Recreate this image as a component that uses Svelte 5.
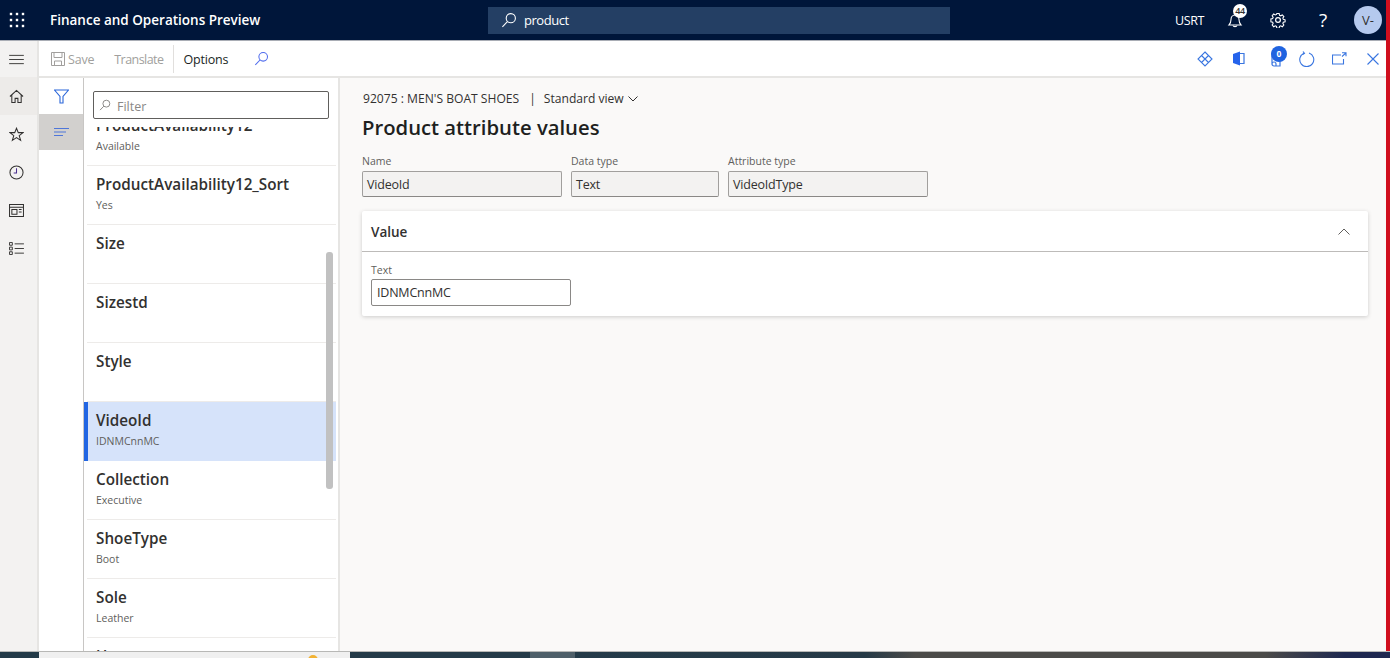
<script lang="ts">
	// Product attribute values page: app bar, toolbar, attribute list and detail form

	const attributes = [
		{ name: 'ProductAvailability12', value: 'Available' },
		{ name: 'ProductAvailability12_Sort', value: 'Yes' },
		{ name: 'Size', value: '' },
		{ name: 'Sizestd', value: '' },
		{ name: 'Style', value: '' },
		{ name: 'VideoId', value: 'IDNMCnnMC', selected: true },
		{ name: 'Collection', value: 'Executive' },
		{ name: 'ShoeType', value: 'Boot' },
		{ name: 'Sole', value: 'Leather' },
		{ name: 'Upper', value: 'Leather' }
	];

	const fields = [
		{ label: 'Name', value: 'VideoId', width: 200 },
		{ label: 'Data type', value: 'Text', width: 148 },
		{ label: 'Attribute type', value: 'VideoIdType', width: 200 }
	];
</script>

<div class="page">
	<div class="frame">
		<div class="app">
			<header class="topbar">
				<div class="waffle">
					<svg width="16" height="16" viewBox="0 0 16 16" fill="#fff">
						{#each [2, 8, 14] as y}
							{#each [2, 8, 14] as x}
								<rect x={x - 1.2} y={y - 1.2} width="2.4" height="2.4" />
							{/each}
						{/each}
					</svg>
				</div>
				<div class="app-title">Finance and Operations Preview</div>
				<div class="search">
					<svg width="16" height="16" viewBox="0 0 16 16" fill="none" stroke="#fff" stroke-width="1.1">
						<circle cx="9.8" cy="6.2" r="4.6" />
						<path d="M6.4 9.6 1.4 14.8" />
					</svg>
					<span>product</span>
				</div>
				<div class="top-right">
					<span class="company">USRT</span>
					<div class="bell">
						<svg width="16" height="18" viewBox="0 0 16 18" fill="none" stroke="#fff" stroke-width="1.1">
							<path d="M2 14h12c-1.5-1.5-2-3-2-5.5 0-2.5-1.5-4.5-4-4.5S4 6 4 8.5C4 11 3.5 12.5 2 14Z" />
							<path d="M6 14.5c.3 1.5 3.7 1.5 4 0" />
						</svg>
						<span class="bell-badge">44</span>
					</div>
					<div class="gear">
						<svg width="16" height="16" viewBox="0 0 16 16" fill="none" stroke="#fff" stroke-width="1.2">
							<circle cx="8" cy="8" r="2.4" />
							<path d="M6.7 1h2.6l.4 2 1.3.6 1.8-1 1.700 1.900-1.100 1.700.5 1.300 2 .5v2.300l-2 .5-.5 1.300 1.100 1.700-1.700 1.900-1.800-1-1.300.6-.4 2H6.700l-.4-2-1.300-.6-1.800 1-1.700-1.900 1.100-1.700-.5-1.300-2-.5V7l2-.5.5-1.300-1.100-1.700 1.700-1.900 1.800 1 1.300-.6Z" transform="translate(.8 .6) scale(.9)" />
						</svg>
					</div>
					<span class="help">?</span>
					<span class="avatar">V-</span>
				</div>
			</header>

			<div class="body">
				<nav class="rail">
					<div class="rail-btn menu">
						<svg width="15" height="11" viewBox="0 0 16 12" stroke="#323130" stroke-width="1">
							<path d="M0 1.5h16M0 6h16M0 10.5h16" />
						</svg>
					</div>
					<div class="rail-btn current">
						<svg width="15" height="15" viewBox="0 0 16 16" fill="none" stroke="#323130" stroke-width="1.1">
							<path d="M1 8 8 1.5 15 8M3 6.5V14.5h3.5V10h3v4.500H13V6.500" />
						</svg>
					</div>
					<div class="rail-btn">
						<svg width="15" height="15" viewBox="0 0 16 16" fill="none" stroke="#323130" stroke-width="1.1">
							<path d="M8 1.3 9.9 6h5l-4 3.2 1.5 5L8 11.3l-4.4 2.9 1.5-5L1.1 6h5Z" />
						</svg>
					</div>
					<div class="rail-btn">
						<svg width="15" height="15" viewBox="0 0 16 16" fill="none" stroke="#323130" stroke-width="1.1">
							<circle cx="8" cy="8" r="7" />
							<path d="M8 3.5V8.500H5" stroke="#4b2f8f" />
						</svg>
					</div>
					<div class="rail-btn">
						<svg width="15" height="13" viewBox="0 0 16 14" fill="none" stroke="#323130" stroke-width="1.1">
							<path d="M.5 .5h15v13H.5ZM.5 3.5h15M3 6h5.5v5H3ZM10.5 6h3M10.5 8.5h3" />
						</svg>
					</div>
					<div class="rail-btn">
						<svg width="15" height="13" viewBox="0 0 16 14" fill="none" stroke="#323130" stroke-width="1">
							<path d="M.5 .5h3v3h-3ZM.5 5.5h3v3h-3ZM.5 10.5h3v3h-3ZM6 2h10M6 7h10M6 12h10" />
						</svg>
					</div>
				</nav>

				<div class="workspace">
					<div class="toolbar">
						<div class="tool disabled save">
							<svg width="14" height="14" viewBox="0 0 14 14" fill="none" stroke="#a19f9d" stroke-width="1">
								<path d="M.5 .5h13v13H.5ZM3 .5v5h8v-5M3.5 13.5V9h7v4.5" />
							</svg>
							<span>Save</span>
						</div>
						<div class="tool disabled translate"><span>Translate</span></div>
						<div class="divider"></div>
						<div class="tool options"><span>Options</span></div>
						<svg class="find" width="15" height="15" viewBox="0 0 16 16" fill="none" stroke="#4f6bed" stroke-width="1.1">
							<circle cx="9.8" cy="6.2" r="4.6" />
							<path d="M6.4 9.6 1.4 14.8" />
						</svg>
						<div class="tool-icons">
							<svg width="16" height="16" viewBox="0 0 16 16" fill="none" stroke="#3a76e0" stroke-width="1.1">
								<path d="M8 1 15 8 8 15 1 8ZM4.5 4.5 11.5 11.5M11.5 4.5 4.5 11.5" />
							</svg>
							<svg class="office" width="13" height="15" viewBox="0 0 13 15">
								<path d="M1 3 8 .5V14.500L1 12Z" fill="#2563eb" />
								<path d="M8 2.5h4v10H8" fill="none" stroke="#3a76e0" stroke-width="1.2" />
							</svg>
							<div class="attach">
								<svg width="12" height="20" viewBox="0 0 12 20" fill="none" stroke="#3a76e0" stroke-width="1.2">
									<path d="M1 4h8v13H3c-1.2 0-2-.8-2-2Zm0 11c0-1.2.8-2 2-2 1.2 0 2 .8 2 2v2" />
								</svg>
								<span class="attach-badge">0</span>
							</div>
							<svg class="refresh" width="16" height="16" viewBox="0 0 16 16" fill="none" stroke="#3a76e0" stroke-width="1.1">
								<path d="M5 2.2a7 7 0 1 0 5 -.2" />
								<path d="M4 .5 5.5 2.3 3.5 3.5" />
							</svg>
							<svg class="popout" width="15" height="13" viewBox="0 0 15 13" fill="none" stroke="#3a76e0" stroke-width="1.1">
								<path d="M9 3H.5v9h11V7M10 .8h4v3.5M14 .8 10 4.5" />
							</svg>
							<svg class="close" width="12" height="12" viewBox="0 0 12 12" stroke="#3a76e0" stroke-width="1.1">
								<path d="M.5 .5 11.5 11.5M11.5 .5 .5 11.5" />
							</svg>
						</div>
					</div>

					<div class="content">
						<div class="pane-tabs">
							<div class="pane-tab">
								<svg width="15" height="15" viewBox="0 0 15 15" fill="none" stroke="#2b66d9" stroke-width="1.1">
									<path d="M.5 1h14L9 7.5V14H6V7.5Z" />
								</svg>
							</div>
							<div class="pane-tab active">
								<svg width="15" height="8" viewBox="0 0 15 8" stroke="#4f76d9" stroke-width="1">
									<path d="M0 .5h15M0 4h12M0 7.5h9" />
								</svg>
							</div>
						</div>

						<aside class="list-pane">
							<div class="filter-wrap">
								<div class="filter">
									<svg width="12" height="12" viewBox="0 0 16 16" fill="none" stroke="#8a8886" stroke-width="1.3">
										<circle cx="9.8" cy="6.2" r="4.6" />
										<path d="M6.4 9.6 1.4 14.8" />
									</svg>
									<span>Filter</span>
								</div>
							</div>
							<div class="list">
								<div class="list-inner">
									{#each attributes as item}
										<div class="row" class:selected={item.selected}>
											<div class="row-name">{item.name}</div>
											<div class="row-value">{item.value}</div>
										</div>
									{/each}
								</div>
								<div class="scroll-thumb"></div>
							</div>
						</aside>

						<main class="detail">
							<div class="crumb">
								<span>92075 : MEN'S BOAT SHOES</span>
								<span class="crumb-sep">|</span>
								<span>Standard view</span>
								<svg width="10" height="6" viewBox="0 0 10 6" fill="none" stroke="#323130" stroke-width="1">
									<path d="M.5 .5 5 5 9.5 .5" />
								</svg>
							</div>
							<h1>Product attribute values</h1>

							<div class="fields">
								{#each fields as field}
									<div class="field">
										<div class="field-label">{field.label}</div>
										<div class="field-input" style="width: {field.width}px">{field.value}</div>
									</div>
								{/each}
							</div>

							<section class="card">
								<div class="card-head">
									<span class="card-title">Value</span>
									<svg width="12" height="7" viewBox="0 0 12 7" fill="none" stroke="#605e5c" stroke-width="1">
										<path d="M.5 6.5 6 1l5.5 5.5" />
									</svg>
								</div>
								<div class="card-body">
									<div class="field-label">Text</div>
									<div class="text-input">IDNMCnnMC</div>
								</div>
							</section>
						</main>
					</div>
				</div>
			</div>
		</div>
		<div class="redline"></div>
	</div>

	<footer class="taskbar">
		<div class="task-a"></div>
		<div class="task-window"><span class="task-dot"></span></div>
		<div class="task-b"></div>
		<div class="task-active"></div>
		<div class="task-rest"><span class="tray">ENG</span><span class="clock">2:50 PM</span></div>
	</footer>
</div>

<style>
	:global(body) {
		margin: 0;
		background: #faf9f8;
	}

	.page {
		width: 1390px;
		height: 658px;
		display: flex;
		flex-direction: column;
		overflow: hidden;
		font-family: 'Open Sans', 'Noto Sans', sans-serif;
		color: #323130;
	}

	.frame {
		flex: 1;
		display: flex;
		min-height: 0;
	}

	.app {
		flex: 1;
		display: flex;
		flex-direction: column;
		min-width: 0;
	}

	.redline {
		width: 4px;
		background: #d00f1e;
	}

	/* app bar */
	.topbar {
		height: 41px;
		flex: none;
		background: #00163a;
		display: flex;
		align-items: center;
		color: #fff;
		box-sizing: border-box;
		border-bottom: 1px solid #a9adb5;
	}

	.waffle {
		width: 50px;
		padding-left: 9px;
		box-sizing: border-box;
		display: flex;
	}

	.app-title {
		width: 438px;
		font-size: 13.5px;
		font-weight: 600;
	}

	.search {
		width: 462px;
		height: 27px;
		background: #243f64;
		display: flex;
		align-items: center;
		gap: 7px;
		padding-left: 13px;
		box-sizing: border-box;
		font-size: 13px;
		letter-spacing: -0.45px;
	}

	.top-right {
		flex: 1;
		display: flex;
		align-items: center;
		padding-left: 225px;
		font-size: 12.5px;
	}

	.company {
		letter-spacing: -0.4px;
		width: 52px;
	}

	.bell {
		position: relative;
		display: flex;
		width: 35px;
	}

	.bell-badge {
		position: absolute;
		left: 6px;
		top: -7px;
		width: 14px;
		height: 14px;
		border-radius: 50%;
		background: #fff;
		color: #323130;
		font-size: 9px;
		font-weight: 600;
		line-height: 14px;
		text-align: center;
		letter-spacing: -0.4px;
	}

	.gear {
		display: flex;
		width: 57px;
		padding-left: 8px;
		box-sizing: border-box;
	}

	.help {
		font-size: 19px;
		width: 35px;
		font-weight: 400;
	}

	.avatar {
		width: 28px;
		height: 28px;
		border-radius: 50%;
		background: #b5c9ee;
		color: #323130;
		font-size: 13px;
		line-height: 28px;
		text-align: center;
	}

	/* left rail */
	.body {
		flex: 1;
		display: flex;
		min-height: 0;
	}

	.rail {
		width: 37px;
		flex: none;
		background: #f3f2f1;
		border-right: 2px solid #e6e5e3;
	}

	.rail-btn {
		height: 38px;
		display: flex;
		align-items: center;
		justify-content: center;
		padding-right: 5px;
	}

	.rail-btn.menu {
		height: 36px;
	}

	.rail-btn.current {
		background: #edebe9;
	}

	/* toolbar */
	.workspace {
		flex: 1;
		display: flex;
		flex-direction: column;
		min-width: 0;
	}

	.toolbar {
		height: 37px;
		flex: none;
		box-sizing: border-box;
		background: #fff;
		border-bottom: 2px solid #e6e5e3;
		display: flex;
		align-items: center;
		font-size: 12.5px;
	}

	.tool {
		display: flex;
		align-items: center;
		letter-spacing: -0.2px;
	}

	.tool span {
		padding-top: 2px;
	}

	.tool.disabled {
		color: #a19f9d;
	}

	.save {
		gap: 3px;
		margin-left: 12px;
	}

	.translate {
		margin-left: 20px;
		letter-spacing: -0.55px;
	}

	.divider {
		width: 1px;
		height: 28px;
		background: #e1dfdd;
		margin-left: 10px;
	}

	.options {
		margin-left: 9px;
		color: #201f1e;
	}

	.find {
		margin-left: 26px;
	}

	.tool-icons {
		margin-left: auto;
		display: flex;
		align-items: center;
		padding-right: 7px;
	}

	.office {
		margin-left: 19px;
	}

	.attach {
		position: relative;
		display: flex;
		margin-left: 26px;
	}

	.attach-badge {
		position: absolute;
		left: 0;
		top: -3px;
		width: 16px;
		height: 16px;
		border-radius: 50%;
		background: #1f63e0;
		color: #fff;
		font-size: 8.5px;
		font-weight: 700;
		line-height: 16px;
		text-align: center;
	}

	.refresh {
		margin-left: 16px;
	}

	.popout {
		margin-left: 17px;
	}

	.close {
		margin-left: 20px;
	}

	/* pane layout */
	.content {
		flex: 1;
		display: flex;
		min-height: 0;
	}

	.pane-tabs {
		width: 44px;
		flex: none;
		background: #fff;
		border-right: 1px solid #c8c6c4;
	}

	.pane-tab {
		height: 36px;
		display: flex;
		align-items: center;
		justify-content: center;
	}

	.pane-tab.active {
		background: #d2d0ce;
	}

	.list-pane {
		width: 254px;
		flex: none;
		background: #fff;
		border-right: 2px solid #e6e5e3;
		display: flex;
		flex-direction: column;
		min-height: 0;
	}

	.filter-wrap {
		padding: 13px 9px 8px 9px;
		flex: none;
		position: relative;
		z-index: 1;
		background: #fff;
	}

	.filter {
		height: 28px;
		box-sizing: border-box;
		border: 1px solid #605e5c;
		border-radius: 2px;
		display: flex;
		align-items: center;
		gap: 6px;
		padding-left: 5px;
		font-size: 12.5px;
		color: #8a8886;
		width: 236px;
	}

	.filter span {
		padding-top: 2px;
	}

	.list {
		flex: 1;
		position: relative;
		overflow: hidden;
		min-height: 0;
	}

	.list-inner {
		margin-top: -20px;
	}

	.row {
		height: 59px;
		box-sizing: border-box;
		padding: 6px 0 0 12px;
		margin-right: 2px;
		background: linear-gradient(#edebe9, #edebe9) no-repeat 3px 100% / calc(100% - 3px) 1px;
	}

	.row.selected {
		background: #d6e3fa;
		border-left: 4px solid #2266e3;
		padding-left: 8px;
	}

	.row-name {
		font-size: 15.25px;
		font-weight: 600;
		line-height: 24px;
		color: #323130;
	}

	.row-value {
		font-size: 10.5px;
		line-height: 16px;
		margin-top: 1px;
		color: #605e5c;
	}

	.scroll-thumb {
		position: absolute;
		left: 242px;
		top: 125px;
		width: 7px;
		height: 237px;
		border-radius: 3px;
		background: #c1c1c1;
	}

	/* detail */
	.detail {
		flex: 1;
		background: #faf9f8;
		padding: 13px 18px 0 22px;
		min-width: 0;
	}

	.crumb {
		display: flex;
		align-items: center;
		font-size: 12.1px;
		line-height: 16px;
		padding-left: 1px;
	}

	.crumb-sep {
		margin: 0 8px 0 10px;
	}

	.crumb svg {
		margin-left: 4px;
	}

	h1 {
		margin: 5px 0 0;
		font-size: 20.25px;
		font-weight: 600;
		line-height: 30px;
		color: #201f1e;
	}

	.fields {
		display: flex;
		gap: 9px;
		margin-top: 12px;
	}

	.field-label {
		font-size: 10.5px;
		line-height: 14px;
		color: #605e5c;
		margin-bottom: 3px;
	}

	.field-input {
		height: 26px;
		box-sizing: border-box;
		background: #f3f2f1;
		border: 1px solid #a19f9d;
		border-bottom-color: #8a8886;
		border-radius: 2px;
		padding-left: 4px;
		font-size: 12.5px;
		line-height: 26px;
		letter-spacing: -0.2px;
		color: #323130;
	}

	.card {
		margin-top: 14px;
		background: #fff;
		border-radius: 2px;
		box-shadow: 0 1px 4px rgba(0, 0, 0, 0.18);
		height: 105px;
	}

	.card-head {
		height: 41px;
		box-sizing: border-box;
		border-bottom: 1px solid #bdbbb9;
		display: flex;
		align-items: center;
		justify-content: space-between;
		padding: 0 18px 0 9px;
		font-size: 13.5px;
		font-weight: 600;
	}

	.card-title {
		padding-top: 2px;
	}

	.card-body {
		padding: 11px 9px 0;
	}

	.card-body .field-label {
		margin-bottom: 2px;
	}

	.text-input {
		width: 200px;
		height: 27px;
		box-sizing: border-box;
		background: #fff;
		border: 1px solid #8a8886;
		border-radius: 2px;
		padding-left: 5px;
		font-size: 12.5px;
		line-height: 26px;
		letter-spacing: -0.2px;
	}

	/* OS taskbar peeking in at the bottom */
	.taskbar {
		height: 7px;
		flex: none;
		display: flex;
		border-top: 1px solid #b8b8b6;
		box-sizing: border-box;
		background: #233a48;
	}

	.task-a {
		width: 39px;
		background: #233a48;
	}

	.task-window {
		width: 311px;
		background: #f0f0f0;
		position: relative;
	}

	.task-dot {
		position: absolute;
		left: 269px;
		top: 3px;
		width: 10px;
		height: 10px;
		border-radius: 50%;
		background: #f2b233;
	}

	.task-b {
		width: 180px;
		background: #243b49;
	}

	.task-active {
		width: 45px;
		background: #4e5f69;
	}

	.task-rest {
		flex: 1;
		background: linear-gradient(90deg, #243b49 0, #263a47 290px, #4b4b49 340px, #4b4b49 690px, #1e2850 770px);
		position: relative;
		overflow: hidden;
		color: #fff;
		font-size: 11px;
	}

	.tray {
		position: absolute;
		left: 680px;
		top: 2px;
		line-height: 16px;
	}

	.clock {
		position: absolute;
		left: 717px;
		top: 2px;
		line-height: 16px;
	}
</style>
